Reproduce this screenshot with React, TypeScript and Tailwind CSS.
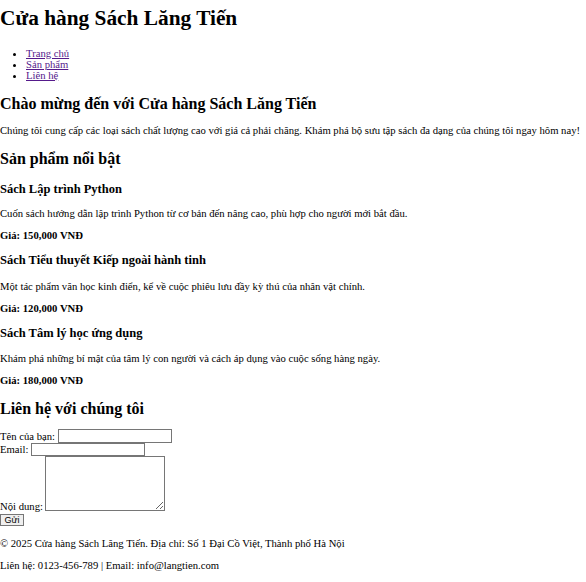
import React from "react";

const serif = { fontFamily: '"Liberation Serif", "Times New Roman", serif' };

function P({ mt, children, bold }: { mt: string; children: React.ReactNode; bold?: boolean }) {
  return (
    <p className={`${mt} h-[11px] text-[10.67px] leading-[11px] whitespace-nowrap ${bold ? "font-bold" : ""}`}>{children}</p>
  );
}

export default function App() {
  return (
    <div className="w-[586px] h-[582px] bg-white text-black overflow-hidden" style={serif}>
      <div className="pt-[7px]">
        <h1 className="h-[22px] text-[21.33px] leading-[22px] font-bold whitespace-nowrap">Cửa hàng Sách Lăng Tiến</h1>
        <ul className="mt-[19px] list-disc pl-[26px] text-[10.67px] leading-[11px]">
          <li className="h-[11px]"><a href="#" className="text-[#551a8b] underline">Trang chủ</a></li>
          <li className="h-[11px]"><a href="#" className="text-[#551a8b] underline">Sản phẩm</a></li>
          <li className="h-[11px]"><a href="#" className="text-[#551a8b] underline">Liên hệ</a></li>
        </ul>
        <h2 className="mt-[14px] h-[17px] text-[16px] leading-[17px] font-bold whitespace-nowrap">Chào mừng đến với Cửa hàng Sách Lăng Tiến</h2>
        <P mt="mt-[13px]">Chúng tôi cung cấp các loại sách chất lượng cao với giá cả phải chăng. Khám phá bộ sưu tập sách đa dạng của chúng tôi ngay hôm nay!</P>
        <h2 className="mt-[14px] h-[17px] text-[16px] leading-[17px] font-bold whitespace-nowrap">Sản phẩm nổi bật</h2>

        <h3 className="mt-[16px] h-[13px] text-[12.5px] leading-[13px] font-bold whitespace-nowrap">Sách Lập trình Python</h3>
        <P mt="mt-[12px]">Cuốn sách hướng dẫn lập trình Python từ cơ bản đến nâng cao, phù hợp cho người mới bắt đầu.</P>
        <P mt="mt-[11px]" bold>Giá: 150,000 VNĐ</P>

        <h3 className="mt-[13px] h-[13px] text-[12.5px] leading-[13px] font-bold whitespace-nowrap">Sách Tiểu thuyết Kiếp ngoài hành tinh</h3>
        <P mt="mt-[14px]">Một tác phẩm văn học kinh điển, kể về cuộc phiêu lưu đầy kỳ thú của nhân vật chính.</P>
        <P mt="mt-[11px]" bold>Giá: 120,000 VNĐ</P>

        <h3 className="mt-[13px] h-[13px] text-[12.5px] leading-[13px] font-bold whitespace-nowrap">Sách Tâm lý học ứng dụng</h3>
        <P mt="mt-[13px]">Khám phá những bí mật của tâm lý con người và cách áp dụng vào cuộc sống hàng ngày.</P>
        <P mt="mt-[11px]" bold>Giá: 180,000 VNĐ</P>

        <h2 className="mt-[14px] h-[17px] text-[16px] leading-[17px] font-bold whitespace-nowrap">Liên hệ với chúng tôi</h2>

        <form className="mt-[12px] text-[10.67px] leading-[11px]" onSubmit={(e) => e.preventDefault()}>
          <div className="flex items-center h-[14px]">
            <span className="whitespace-nowrap">Tên của bạn:</span>
            <input type="text" className="ml-[3px] w-[114px] h-[14px] border border-[#767676] bg-white" />
          </div>
          <div className="flex items-center h-[13px]">
            <span className="whitespace-nowrap">Email:</span>
            <input type="email" className="ml-[3px] w-[114px] h-[13px] border border-[#767676] bg-white" />
          </div>
          <div className="flex items-end h-[55px]">
            <span className="whitespace-nowrap translate-y-[1px]">Nội dung:</span>
            <textarea className="ml-[2px] w-[120px] h-[55px] border border-[#767676] bg-white resize" />
          </div>
          <button
            type="submit"
            className="mt-[3px] block w-[24px] h-[12px] border border-[#767676] bg-[#efefef] text-[9px] leading-[10px] text-black"
            style={{ fontFamily: '"Liberation Sans", Arial, sans-serif' }}
          >
            Gửi
          </button>
        </form>

        <P mt="mt-[12px]">© 2025 Cửa hàng Sách Lăng Tiến. Địa chỉ: Số 1 Đại Cồ Việt, Thành phố Hà Nội</P>
        <P mt="mt-[11px]">Liên hệ: 0123-456-789 | Email: info@langtien.com</P>
      </div>
    </div>
  );
}
